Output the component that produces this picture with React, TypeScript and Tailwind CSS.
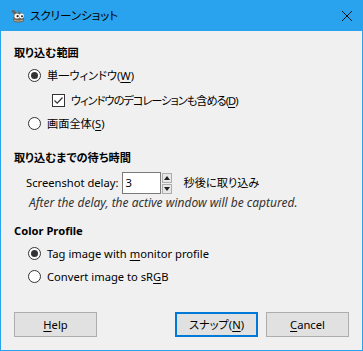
import React from 'react';

const font = { fontFamily: '"Noto Sans", "Noto Sans CJK JP", sans-serif' };

function U({ children }: { children: React.ReactNode }) {
  return <span className="underline underline-offset-2">{children}</span>;
}

function Radio({ checked, children }: { checked?: boolean; children: React.ReactNode }) {
  return (
    <div className="flex items-center h-[23px] pl-[27px]">
      <span className="w-[13px] h-[13px] rounded-full border border-[#333] bg-white flex items-center justify-center">
        {checked && <span className="w-[7px] h-[7px] rounded-full bg-[#333]" />}
      </span>
      <span className="ml-[6px]">{children}</span>
    </div>
  );
}

function Checkbox({ children }: { children: React.ReactNode }) {
  return (
    <div className="flex items-center h-[23px] pl-[51px] mt-[2px]">
      <span className="w-[13px] h-[13px] border border-[#333] bg-white flex items-center justify-center">
        <svg width="11" height="11" viewBox="0 0 11 11">
          <path d="M1.5 5.5 L4.2 8.2 L9.5 2.5" fill="none" stroke="#333" strokeWidth="1.2" />
        </svg>
      </span>
      <span className="ml-[6px] tracking-[-1px]">{children}</span>
    </div>
  );
}

function Wilber() {
  return (
    <svg width="18" height="16" viewBox="0 0 18 16">
      <path d="M2 3 L5 6 L4 13 Q9 16 15 13 L15 7 Q12 4 8 5 L5 2 Z" fill="#6d6257" />
      <path d="M9 2 L10 5 L12 5 Z" fill="#6d6257" />
      <circle cx="8" cy="8" r="2.6" fill="#fff" />
      <circle cx="12.5" cy="8" r="2.4" fill="#fff" />
      <circle cx="8.6" cy="8.2" r="1.1" fill="#222" />
      <circle cx="13" cy="8.2" r="1" fill="#222" />
      <path d="M5 12 Q9 14 14 12" fill="none" stroke="#bfae8f" strokeWidth="1.2" />
    </svg>
  );
}

function Button({ children, primary }: { children: React.ReactNode; primary?: boolean }) {
  return (
    <div
      className={
        primary
          ? 'w-[83px] h-[25px] flex items-center justify-center bg-[#e1e1e1] border-2 border-[#0078d7]'
          : 'w-[83px] h-[25px] flex items-center justify-center bg-[#e1e1e1] border border-[#adadad]'
      }
    >
      {children}
    </div>
  );
}

export default function App() {
  return (
    <div
      style={font}
      className="w-[363px] h-[351px] flex flex-col bg-[#29a3ee] text-[11.2px] text-black overflow-hidden [font-feature-settings:'palt']"
    >
      {/* Title bar */}
      <div className="h-[31px] flex items-center pl-[9px] pr-[10px] shrink-0">
        <Wilber />
        <span className="ml-[3px] text-[11.5px]">スクリーンショット</span>
        <svg className="ml-auto" width="12" height="12" viewBox="0 0 12 12">
          <path d="M1 1 L11 11 M11 1 L1 11" stroke="#111" strokeWidth="1" />
        </svg>
      </div>

      {/* Body */}
      <div className="flex-1 mx-px mb-px bg-[#f0f0f0] flex flex-col pt-[10px] leading-none">
        <div className="pl-[13px] h-[23px] flex items-center font-bold">取り込む範囲</div>
        <Radio checked>
          単一ウィンドウ(<U>W</U>)
        </Radio>
        <Checkbox>
          ウィンドウのデコレーションも含める(<U>D</U>)
        </Checkbox>
        <Radio>
          画面全体(<U>S</U>)
        </Radio>

        <div className="h-[11px]" />
        <div className="pl-[13px] h-[23px] flex items-center font-bold">取り込むまでの待ち時間</div>
        <div className="flex items-center pl-[25px] h-[26px] mt-px">
          <span>Screenshot delay:</span>
          <div className="ml-[3px] w-[39px] h-[22px] bg-white border border-[#7a7a7a] flex items-center pl-[3px]">3</div>
          <div className="ml-px flex flex-col gap-px">
            <div className="w-[10px] h-[10px] border border-[#adadad] bg-[#e8e8e8] flex items-center justify-center">
              <svg width="6" height="4" viewBox="0 0 6 4"><path d="M0 4 L3 0 L6 4 Z" fill="#222" /></svg>
            </div>
            <div className="w-[10px] h-[10px] border border-[#adadad] bg-[#e8e8e8] flex items-center justify-center">
              <svg width="6" height="4" viewBox="0 0 6 4"><path d="M0 0 L3 4 L6 0 Z" fill="#222" /></svg>
            </div>
          </div>
          <span className="ml-[12px]">秒後に取り込み</span>
        </div>
        <div className="pl-[28px] h-[14px] flex items-center italic text-[12px] text-[#333]">
          After the delay, the active window will be captured.
        </div>

        <div className="h-[9px]" />
        <div className="pl-[13px] h-[23px] flex items-center font-bold">Color Profile</div>
        <Radio checked>
          Tag image with <U>m</U>onitor profile
        </Radio>
        <Radio>
          Convert image to sR<U>G</U>B
        </Radio>

        <div className="mt-auto mb-[13px] flex items-center px-[13px]">
          <Button>
            <U>H</U>elp
          </Button>
          <div className="ml-auto flex gap-[8px]">
            <Button primary>
              スナップ(<U>N</U>)
            </Button>
            <Button>
              <U>C</U>ancel
            </Button>
          </div>
        </div>
      </div>
    </div>
  );
}
